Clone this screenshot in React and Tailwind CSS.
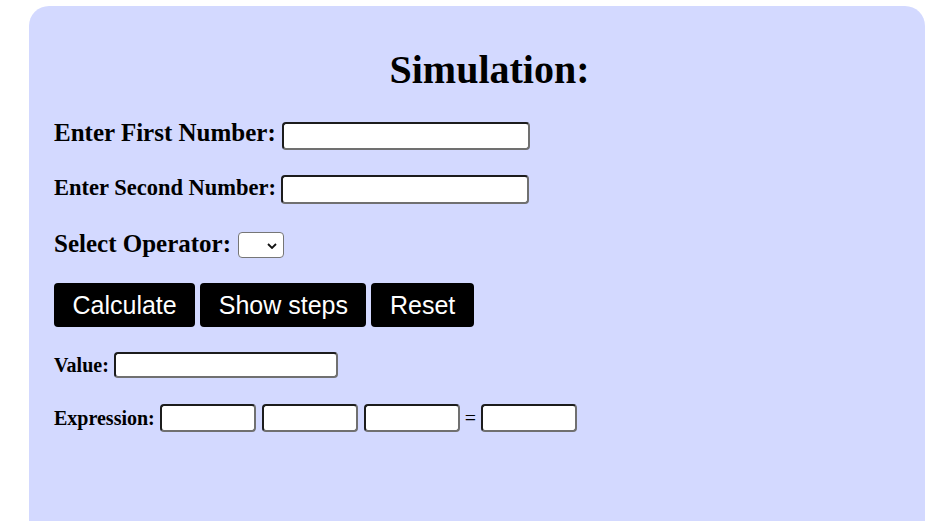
import React from "react";

const inputCls =
  "block bg-white border-2 border-t-[#1c1c1c] border-l-[#1c1c1c] border-b-[#707070] border-r-[#707070] rounded-[4px] outline-none";

const labelCls = "font-bold leading-none text-black font-['Liberation_Serif',serif] whitespace-nowrap";

const btnCls =
  "h-[44px] px-[18.5px] bg-black text-white rounded-[4px] text-[25px] leading-none font-['Liberation_Sans',Arial,sans-serif] flex items-center";

export default function App() {
  return (
    <div className="w-[936px] h-[521px] overflow-hidden bg-white pt-[6px] pl-[29px] pr-[11px]">
      <div className="bg-[#d3d9ff] rounded-t-[20px] h-[600px] pl-[25px] pt-[44px] flex flex-col">
        <h1 className={`${labelCls} text-[40px] text-center`}>Simulation:</h1>

        <div className="flex items-center gap-[6px] mt-[32px] h-[28px]">
          <span className={`${labelCls} text-[25px] mb-[7px]`}>Enter First Number:</span>
          <input className={`${inputCls} w-[248px] h-[28px]`} />
        </div>

        <div className="flex items-center gap-[5px] mt-[25px] h-[29px]">
          <span className={`${labelCls} text-[22.5px] mb-[3px]`}>Enter Second Number:</span>
          <input className={`${inputCls} w-[248px] h-[29px]`} />
        </div>

        <div className="flex items-center gap-[7px] mt-[28px] h-[26px]">
          <span className={`${labelCls} text-[25px] mb-[3px]`}>Select Operator:</span>
          <div className="relative w-[46px] h-[26px] bg-white border border-[#767676] rounded-[4px]">
            <svg
              className="absolute left-[28px] top-[10px]"
              width="10"
              height="6"
              viewBox="0 0 10 6"
              fill="none"
            >
              <path d="M1 1 L5 5 L9 1" stroke="#111" strokeWidth="1.8" />
            </svg>
          </div>
        </div>

        <div className="flex gap-[5px] mt-[25px]">
          <button className={btnCls}>Calculate</button>
          <button className={btnCls}>Show steps</button>
          <button className={btnCls}>Reset</button>
        </div>

        <div className="flex items-center gap-[5px] mt-[25px] h-[26px]">
          <span className={`${labelCls} text-[20px]`}>Value:</span>
          <input className={`${inputCls} w-[224px] h-[26px]`} />
        </div>

        <div className="flex items-center mt-[26px] h-[28px]">
          <span className={`${labelCls} text-[20px] mr-[5px]`}>Expression:</span>
          <input className={`${inputCls} w-[96px] h-[28px]`} />
          <input className={`${inputCls} w-[96px] h-[28px] ml-[6px]`} />
          <input className={`${inputCls} w-[96px] h-[28px] ml-[6px]`} />
          <span className={`${labelCls} text-[20px] font-normal mx-[5px]`}>=</span>
          <input className={`${inputCls} w-[96px] h-[28px]`} />
        </div>
      </div>
    </div>
  );
}
